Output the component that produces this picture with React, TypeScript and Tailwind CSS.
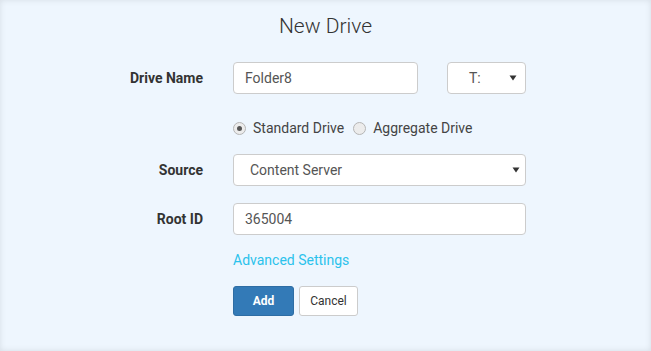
import React from 'react';

const Caret: React.FC = () => (
  <svg width="8" height="6" viewBox="0 0 8 6" className="text-[#333]">
    <path d="M0.5 0.5 L7.5 0.5 L4 5.5 Z" fill="currentColor" />
  </svg>
);

const Radio: React.FC<{ checked?: boolean; label: string }> = ({ checked, label }) => (
  <label className="flex items-center">
    <span className="flex h-[13px] w-[13px] items-center justify-center rounded-full border border-[#b5b5b5] bg-[#ececec]">
      {checked && <span className="h-[5px] w-[5px] rounded-full bg-[#555]"></span>}
    </span>
    <span className="ml-[7px] text-[14px] text-[#444]">{label}</span>
  </label>
);

const App: React.FC = () => {
  return (
    <div
      className="h-[351px] w-[651px] bg-[#eef6fe] shadow-[inset_0_0_6px_rgba(0,0,0,0.10)]"
      style={{ fontFamily: 'Roboto, "Liberation Sans", sans-serif' }}
    >
      <h1 className="pt-[12px] text-center text-[21px] font-light leading-[28px] text-[#333]">
        New Drive
      </h1>

      <div className="mt-[22px] grid grid-cols-[203px_293px] gap-x-[30px]">
        {/* Drive Name */}
        <div className="flex h-[32px] items-center justify-end text-[14px] font-bold text-[#333]">
          Drive Name
        </div>
        <div className="flex gap-[29px]">
          <div className="flex h-[32px] w-[185px] items-center rounded-[4px] border border-[#ccc] bg-white px-[11px] text-[14px] text-[#555]">
            Folder8
          </div>
          <div className="flex h-[32px] w-[79px] items-center justify-between rounded-[4px] border border-[#ccc] bg-white pl-[21px] pr-[8px] text-[14px] text-[#555]">
            <span>T:</span>
            <Caret />
          </div>
        </div>

        {/* Drive type */}
        <div></div>
        <div className="mt-[20px] flex h-[28px] items-center gap-[9px]">
          <Radio checked label="Standard Drive" />
          <Radio label="Aggregate Drive" />
        </div>

        {/* Source */}
        <div className="mt-[12px] flex h-[32px] items-center justify-end text-[14px] font-bold text-[#333]">
          Source
        </div>
        <div className="mt-[12px] flex h-[32px] items-center justify-between rounded-[4px] border border-[#ccc] bg-white pl-[16px] pr-[5px] text-[14px] text-[#555]">
          <span>Content Server</span>
          <Caret />
        </div>

        {/* Root ID */}
        <div className="mt-[17px] flex h-[32px] items-center justify-end text-[14px] font-bold text-[#333]">
          Root ID
        </div>
        <div className="mt-[17px] flex h-[32px] items-center rounded-[4px] border border-[#ccc] bg-white px-[11px] text-[14px] text-[#555]">
          365004
        </div>

        {/* Advanced */}
        <div></div>
        <div className="mt-[15px] text-[14px] leading-[20px] text-[#2bc2ec]">Advanced Settings</div>

        {/* Buttons */}
        <div></div>
        <div className="mt-[16px] flex gap-[5px]">
          <button className="h-[30px] w-[61px] rounded-[3px] border border-[#2e6da4] bg-[#337ab7] text-[12px] font-bold text-white">
            Add
          </button>
          <button className="h-[30px] w-[59px] rounded-[3px] border border-[#ccc] bg-white text-[12px] text-[#333]">
            Cancel
          </button>
        </div>
      </div>
    </div>
  );
};

export default App;
